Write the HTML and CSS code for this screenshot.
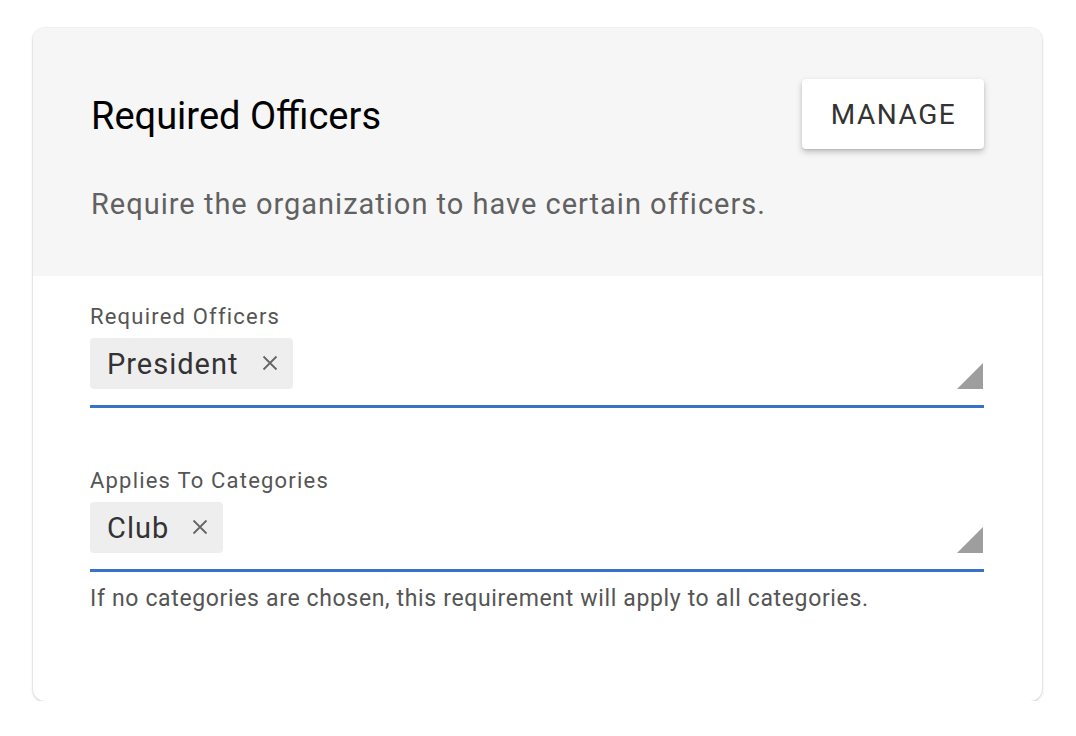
FILE: index.html
```html
<!DOCTYPE html>
<html>
<head>
<meta charset="utf-8">
<link rel="stylesheet" href="styles.css">
</head>
<body>
<div class="card">
  <div class="card-head">
    <div class="head-row">
      <h1 class="title">Required Officers</h1>
      <button class="btn">MANAGE</button>
    </div>
    <p class="desc">Require the organization to have certain officers.</p>
  </div>
  <div class="card-body">
    <div class="field">
      <div class="label">Required Officers</div>
      <div class="input">
        <span class="chip">President<svg class="x" width="16" height="16" viewBox="0 0 16 16"><path d="M1.5 1.5L14.5 14.5M14.5 1.5L1.5 14.5" stroke="#666" stroke-width="1.8" fill="none"/></svg></span>
        <span class="tri"></span>
      </div>
    </div>
    <div class="field field2">
      <div class="label">Applies To Categories</div>
      <div class="input">
        <span class="chip">Club<svg class="x" width="16" height="16" viewBox="0 0 16 16"><path d="M1.5 1.5L14.5 14.5M14.5 1.5L1.5 14.5" stroke="#666" stroke-width="1.8" fill="none"/></svg></span>
        <span class="tri"></span>
      </div>
      <div class="help">If no categories are chosen, this requirement will apply to all categories.</div>
    </div>
  </div>
</div>
</body>
</html>
```
FILE: styles.css
```css
html, body { margin: 0; padding: 0; background: #fff; }
body { font-family: Roboto, "Liberation Sans", sans-serif; padding: 28px 34px 0 33px; }
.card {
  width: 1009px;
  height: 673px;
  box-sizing: border-box;
  border-radius: 12px;
  background: #fff;
  box-shadow: 0 1px 3px rgba(0,0,0,0.18), 0 0 0 1px rgba(0,0,0,0.04);
  overflow: hidden;
}
.card-head {
  background: #f6f6f6;
  height: 248px;
  box-sizing: border-box;
  padding: 51px 58px 0 58px;
}
.head-row { display: flex; justify-content: space-between; align-items: center; }
.title { margin: 0; font-weight: 400; font-size: 38px; color: #000; margin-top: 3px; }
.btn {
  width: 182px; height: 70px;
  border: none; border-radius: 4px; background: #fff;
  box-shadow: 0 3px 6px rgba(0,0,0,0.22), 0 1px 2px rgba(0,0,0,0.1);
  font-family: Roboto, sans-serif; font-size: 28px; color: #333; letter-spacing: 1.5px;
  padding: 0 0 0 1px;
}
.desc { margin: 38px 0 0 0; font-size: 29px; letter-spacing: 1px; color: #616161; }
.card-body { padding: 26px 58px 0 57px; }
.label { font-size: 22px; letter-spacing: 1.2px; color: #555; line-height: 30px; }
.input {
  position: relative;
  display: flex; align-items: center;
  margin-top: 6px;
  padding-bottom: 16px;
  border-bottom: 3px solid #3872c9;
}
.chip {
  display: inline-flex; align-items: center;
  height: 51px; box-sizing: border-box;
  padding: 0 15px 0 17px;
  background: #eee; border-radius: 4px;
  font-size: 29px; letter-spacing: 1px; color: #333;
}
.x { margin-left: 23px; margin-top: -2px; }
.tri {
  position: absolute; right: 1px; bottom: 16px;
  width: 0; height: 0;
  border-left: 26px solid transparent;
  border-bottom: 26px solid #9e9e9e;
}
.field2 { margin-top: 58px; }
.help { font-size: 23px; letter-spacing: 0.65px; color: #555; margin-top: 13px; }
```
